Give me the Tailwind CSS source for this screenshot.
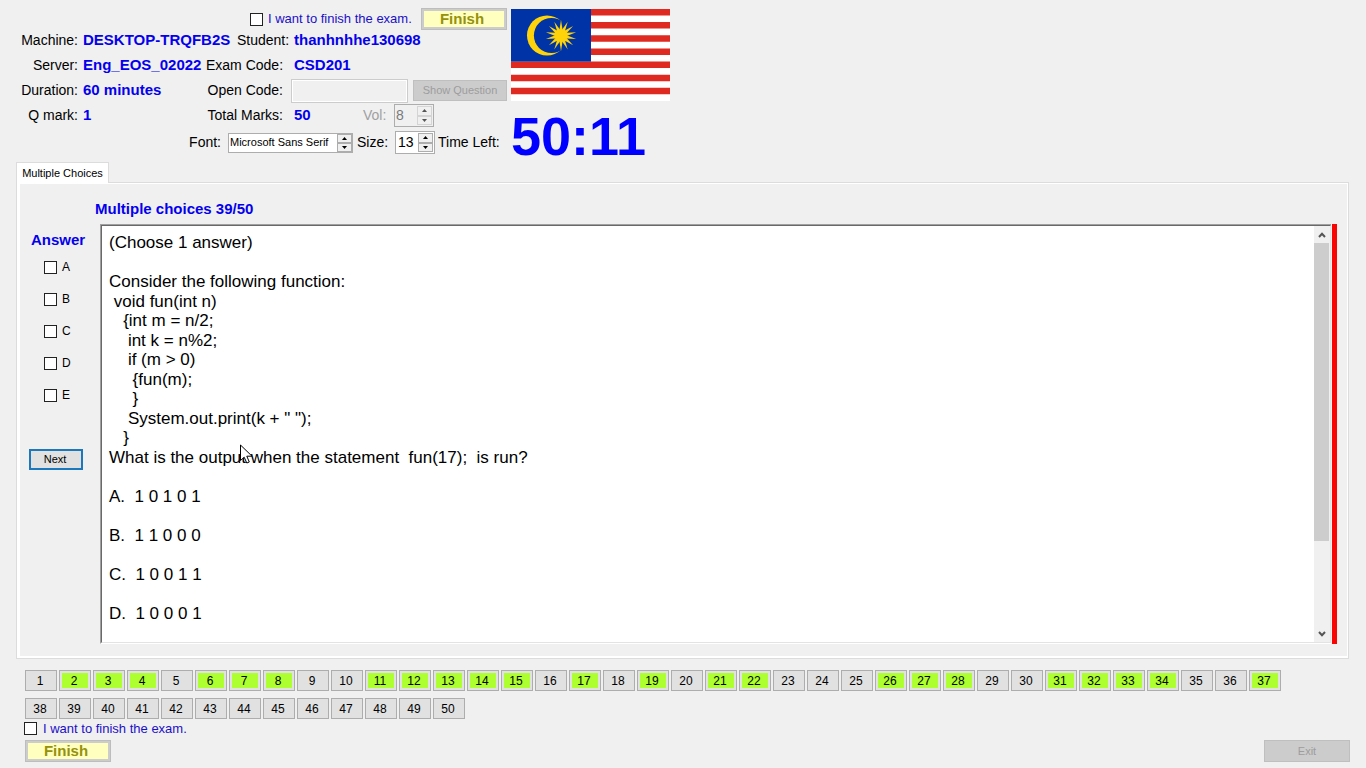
<!DOCTYPE html>
<html lang="en">
<head>
<meta charset="utf-8">
<title>Exam Client</title>
<script src="https://cdn.jsdelivr.net/npm/@tailwindcss/browser@4"></script>
</head>
<body class="bg-[#f0f0f0] font-['Liberation_Sans',Arial,sans-serif] text-black">
<div class="flex min-h-screen flex-col">

  <header class="flex h-[162px] gap-1">
    <div class="w-[507px] pt-2 text-[14px]">
      <div class="flex h-5 items-start pl-[250px]">
        <label class="flex h-[22px] items-center gap-[5px] text-[13px] text-[#1a0fc8]">
          <input type="checkbox" class="size-[13px] appearance-none border border-[#222] bg-white checked:bg-gray-700">I want to finish the exam.</label>
        <button class="ml-auto h-[22px] w-[86px] border border-[#bdbdbd] bg-[#cccccc] p-[2px] text-[15px] font-bold text-[#96910a]"><span class="flex h-full items-center justify-center bg-[#ffffc0] pr-1 pt-px">Finish</span></button>
      </div>
      <dl class="whitespace-nowrap">
        <div class="flex h-[25px] items-center">
          <dt class="w-[78px] text-right">Machine:</dt>
          <dd class="w-[159px] pl-[5px] text-[15px] font-bold text-[#0400ee]">DESKTOP-TRQFB2S</dd>
          <dt class="w-[53px]">Student:</dt>
          <dd class="pl-1 text-[15px] font-bold text-[#0400ee]">thanhnhhe130698</dd>
        </div>
        <div class="flex h-[25px] items-center">
          <dt class="w-[78px] text-right">Server:</dt>
          <dd class="w-[128px] overflow-hidden pl-[5px] text-[15px] font-bold text-[#0400ee]">Eng_EOS_02022</dd>
          <dt class="w-[77px] text-right">Exam Code:</dt>
          <dd class="pl-[11px] text-[15px] font-bold text-[#0400ee]">CSD201</dd>
        </div>
        <div class="flex h-[25px] items-center">
          <dt class="w-[78px] text-right">Duration:</dt>
          <dd class="w-[128px] pl-[5px] text-[15px] font-bold text-[#0400ee]">60 minutes</dd>
          <dt class="w-[77px] text-right"><label for="open">Open Code:</label></dt>
          <dd class="flex flex-1 items-center justify-between pl-2">
            <input id="open" type="text" disabled class="h-6 w-[117px] border border-[#cccccc] bg-[#f0f0f0] outline outline-1 -outline-offset-2 outline-white">
            <button disabled class="h-[21px] w-[94px] border border-[#bfbfbf] bg-[#cccccc] text-[11px] text-[#9d9d9d]">Show Question</button>
          </dd>
        </div>
        <div class="flex h-[25px] items-center">
          <dt class="w-[78px] text-right">Q mark:</dt>
          <dd class="w-[122px] pl-[5px] text-[15px] font-bold text-[#0400ee]">1</dd>
          <dt class="w-[83px] text-right">Total Marks:</dt>
          <dd class="w-[80px] pl-[11px] text-[15px] font-bold text-[#0400ee]">50</dd>
          <dt class="w-[31px] text-[#a0a0a0]"><label for="vol">Vol:</label></dt>
          <dd class="flex h-[23px] w-10 border border-[#adadad] p-px">
            <input id="vol" type="text" value="8" disabled class="w-0 flex-1 text-[14px] text-[#7a7a7a]">
            <span class="flex w-[15px] flex-col">
              <button disabled aria-label="Volume up" class="flex flex-1 items-center justify-center border border-[#d4d4d4]"><svg class="h-[3px] w-[5px]" viewBox="0 0 5 3"><path d="M0 3L2.5 0L5 3z" fill="#555"/></svg></button>
              <button disabled aria-label="Volume down" class="flex flex-1 items-center justify-center border border-[#d4d4d4]"><svg class="h-[3px] w-[5px]" viewBox="0 0 5 3"><path d="M0 0H5L2.5 3z" fill="#555"/></svg></button>
            </span>
          </dd>
        </div>
      </dl>
      <div class="flex h-[29px] items-center whitespace-nowrap">
        <label for="font" class="w-[221px] text-right">Font:</label>
        <span class="ml-[7px] flex h-5 w-[125px] border border-[#adadad] bg-white">
          <input id="font" type="text" value="Microsoft Sans Serif" class="w-0 flex-1 pl-px text-[11px]">
          <span class="flex w-[15px] flex-col">
            <button aria-label="Next font" class="flex flex-1 items-center justify-center border border-[#adadad] bg-[#f0f0f0]"><svg class="h-[3px] w-[5px]" viewBox="0 0 5 3"><path d="M0 3L2.5 0L5 3z"/></svg></button>
            <button aria-label="Previous font" class="flex flex-1 items-center justify-center border border-[#adadad] bg-[#f0f0f0]"><svg class="h-[3px] w-[5px]" viewBox="0 0 5 3"><path d="M0 0H5L2.5 3z"/></svg></button>
          </span>
        </span>
        <label for="size" class="ml-1 w-[38px]">Size:</label>
        <span class="flex h-[23px] w-10 border border-[#adadad] bg-white p-px">
          <input id="size" type="text" value="13" class="w-0 flex-1 pl-px text-[14px]">
          <span class="flex w-[15px] flex-col">
            <button aria-label="Larger" class="flex flex-1 items-center justify-center border border-[#adadad] bg-[#f0f0f0]"><svg class="h-[3px] w-[5px]" viewBox="0 0 5 3"><path d="M0 3L2.5 0L5 3z"/></svg></button>
            <button aria-label="Smaller" class="flex flex-1 items-center justify-center border border-[#adadad] bg-[#f0f0f0]"><svg class="h-[3px] w-[5px]" viewBox="0 0 5 3"><path d="M0 0H5L2.5 3z"/></svg></button>
          </span>
        </span>
        <span class="ml-[3px]">Time Left:</span>
      </div>
    </div>

    <div class="pt-[9px]">
      <svg class="h-[92px] w-[159px]" viewBox="0 0 159 92" role="img" aria-label="Flag of Malaysia">
        <rect width="159" height="92" fill="#fff"/>
        <path fill="#de2a20" d="M0 0h159v6.5H0zM0 13.1h159v6.5H0zM0 26.3h159v6.5H0zM0 39.4h159v6.5H0zM0 52.6h159v6.5H0zM0 65.7h159v6.5H0zM0 78.8h159v6.5H0z"/>
        <rect width="80" height="52.6" fill="#0033a5"/>
        <circle cx="36" cy="26.5" r="20" fill="#fed30a"/>
        <circle cx="40.5" cy="26.5" r="17.6" fill="#0033a5"/>
        <g transform="translate(50 26.6)" fill="#fed30a">
          <circle r="6.2"/>
          <path id="ray" d="M0-15.5L1.5-6.2V6.2L0 15.5L-1.5 6.2V-6.2z"/>
          <use href="#ray" transform="rotate(25.714)"/>
          <use href="#ray" transform="rotate(51.429)"/>
          <use href="#ray" transform="rotate(77.143)"/>
          <use href="#ray" transform="rotate(102.857)"/>
          <use href="#ray" transform="rotate(128.571)"/>
          <use href="#ray" transform="rotate(154.286)"/>
        </g>
      </svg>
      <div class="mt-2 text-[54px] leading-[54px] font-bold text-[#0000ff]">50:11</div>
    </div>
  </header>

  <main class="mr-[17px] ml-4 flex flex-1 flex-col">
    <div role="tablist" class="flex h-5">
      <button role="tab" aria-selected="true" class="z-10 h-[21px] w-[93px] border border-b-0 border-[#dcdcdc] bg-white text-[11px] whitespace-nowrap">Multiple Choices</button>
    </div>
    <section class="flex flex-1 flex-col border border-[#dcdcdc] bg-white pt-px pr-px pb-[2px] pl-[3px]">
      <div class="flex flex-1 flex-col bg-[#f0f0f0] pr-[10px] pb-3">
        <h1 class="h-10 pt-4 pl-[75px] text-[15px] leading-[18px] font-bold text-[#0400ee]">Multiple choices 39/50</h1>
        <div class="flex flex-1 gap-px">
          <div class="flex w-[79px] flex-col pt-[7px]">
            <h2 class="pl-[11px] text-[15px] leading-[18px] font-bold text-[#0400ee]">Answer</h2>
            <div class="flex flex-col gap-4 pt-[10px] pl-6 text-[12px] leading-4">
              <label class="flex items-center gap-[5px]"><input type="checkbox" class="size-[13px] appearance-none border border-[#222] bg-white checked:bg-gray-700">A</label>
              <label class="flex items-center gap-[5px]"><input type="checkbox" class="size-[13px] appearance-none border border-[#222] bg-white checked:bg-gray-700">B</label>
              <label class="flex items-center gap-[5px]"><input type="checkbox" class="size-[13px] appearance-none border border-[#222] bg-white checked:bg-gray-700">C</label>
              <label class="flex items-center gap-[5px]"><input type="checkbox" class="size-[13px] appearance-none border border-[#222] bg-white checked:bg-gray-700">D</label>
              <label class="flex items-center gap-[5px]"><input type="checkbox" class="size-[13px] appearance-none border border-[#222] bg-white checked:bg-gray-700">E</label>
            </div>
            <button class="mt-[46px] ml-[9px] h-[21px] w-[54px] border-2 border-[#1c78bd] bg-[#e1e1e1] pr-[2px] text-[11px]">Next</button>
          </div>
          <div class="flex flex-1 border-r-[5px] border-[#fa0303]">
            <div class="mr-px flex flex-1 border-t border-l border-[#a0a0a0] border-b border-b-white">
              <div class="relative flex flex-1 border border-t-[#696969] border-r-[#e3e3e3] border-b-[#e3e3e3] border-l-[#696969] bg-white">
                <div class="grid flex-1 auto-rows-[20px_19px] content-start pt-[7px] pl-[7px] text-[17px] leading-5 whitespace-pre">
                  <div>(Choose 1 answer)</div>
                  <div></div>
                  <div>Consider the following function:</div>
                  <div> void fun(int n)</div>
                  <div>   {int m = n/2;</div>
                  <div>    int k = n%2;</div>
                  <div>    if (m &gt; 0)</div>
                  <div>     {fun(m);</div>
                  <div>     }</div>
                  <div>    System.out.print(k + " ");</div>
                  <div>   }</div>
                  <div>What is the output when the statement  fun(17);  is run?</div>
                  <div></div>
                  <div>A.  1 0 1 0 1</div>
                  <div></div>
                  <div>B.  1 1 0 0 0</div>
                  <div></div>
                  <div>C.  1 0 0 1 1</div>
                  <div></div>
                  <div>D.  1 0 0 0 1</div>
                </div>
                <div class="flex w-4 flex-col bg-[#f0f0f0] pr-px">
                  <button aria-label="Scroll up" class="flex h-[17px] items-center justify-center"><svg class="h-[6px] w-2" viewBox="0 0 8 6"><path d="M1 5L4 1.8L7 5" fill="none" stroke="#555" stroke-width="2"/></svg></button>
                  <div class="flex-1"><div class="h-[78%] bg-[#cdcdcd]"></div></div>
                  <button aria-label="Scroll down" class="flex h-[17px] items-center justify-center"><svg class="h-[6px] w-2" viewBox="0 0 8 6"><path d="M1 1L4 4.2L7 1" fill="none" stroke="#555" stroke-width="2"/></svg></button>
                </div>
                <svg class="absolute top-[218px] left-[138px] h-5 w-4" viewBox="0 0 16 20"><path d="M.5 1V16.5L4.2 13.2L6.8 19L9.3 18L6.8 12.2H12z" fill="#fff" stroke="#000"/></svg>
              </div>
            </div>
          </div>
        </div>
      </div>
    </section>
  </main>

  <footer class="pt-[11px] pb-[6px]">
    <nav id="questions" aria-label="Questions" class="flex flex-wrap gap-x-[2px] gap-y-[7px] pr-[68px] pl-[25px]"></nav>
    <label class="mt-[2px] flex h-[14px] items-center gap-[6px] pl-6 text-[13px] leading-[14px] text-[#1a0fc8]">
      <input type="checkbox" class="size-[13px] appearance-none border border-[#222] bg-white checked:bg-gray-700"><span class="pt-[2px]">I want to finish the exam.</span></label>
    <div class="mt-[5px] flex justify-between pr-4 pl-[25px]">
      <button class="h-[22px] w-[86px] border border-[#bdbdbd] bg-[#cccccc] p-[2px] text-[15px] font-bold text-[#96910a]"><span class="flex h-full items-center justify-center bg-[#ffffc0] pr-1 pt-px">Finish</span></button>
      <button disabled class="h-[22px] w-[86px] border border-[#bfbfbf] bg-[#cccccc] text-[11px] text-[#9d9d9d]">Exit</button>
    </div>
  </footer>
</div>
<script>
  const answered = [2,3,4,6,7,8,11,12,13,14,15,17,19,21,22,26,27,28,31,32,33,34,37];
  const nav = document.getElementById('questions');
  for (let n = 1; n <= 50; n++) {
    const button = document.createElement('button');
    button.className = 'h-[21px] w-8 border border-[#adadad] bg-[#e1e1e1] p-[2px] text-[12px]';
    const face = document.createElement('span');
    face.className = answered.includes(n)
      ? 'flex h-full items-center justify-center bg-[#adff2f] pr-[2px]'
      : 'flex h-full items-center justify-center pr-[2px]';
    face.textContent = n;
    button.append(face);
    nav.append(button);
  }
</script>
</body>
</html>
